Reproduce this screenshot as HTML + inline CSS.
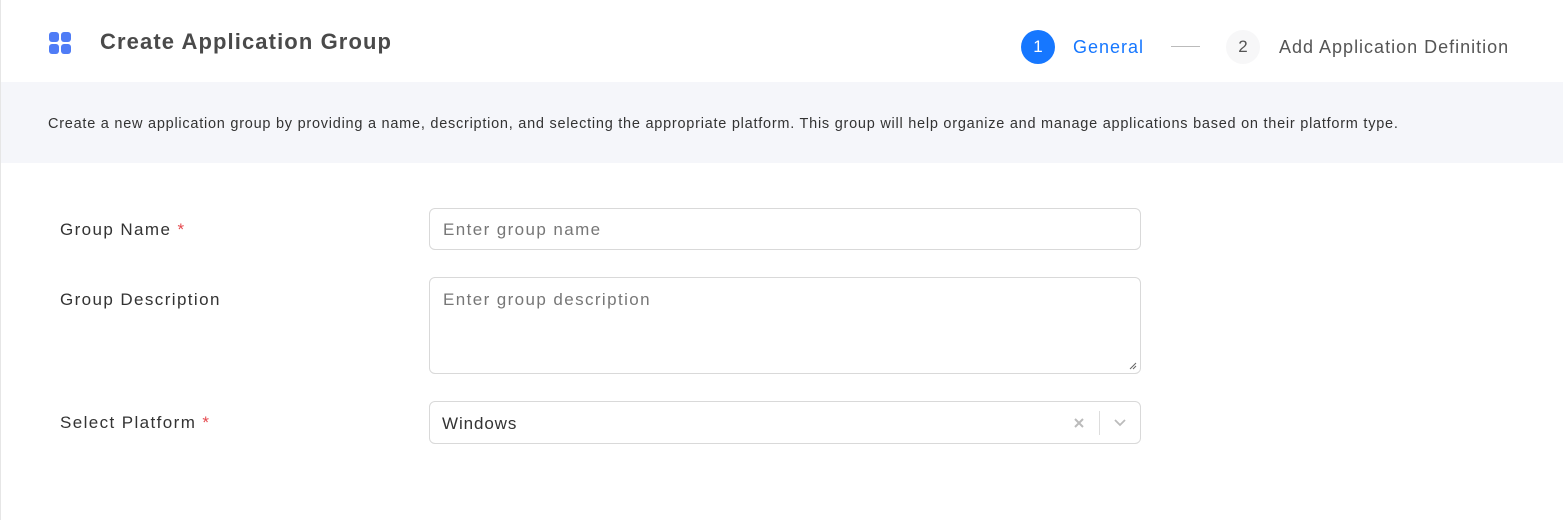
<!DOCTYPE html>
<html><head><meta charset="utf-8"><style>
*{box-sizing:border-box;margin:0;padding:0}
body{width:1563px;height:520px;background:#fff;font-family:"Liberation Sans",sans-serif;position:relative;overflow:hidden;color:#333}
.lb{position:absolute;left:0;top:0;width:1px;height:520px;background:#e6e6e6}
.hdr{position:absolute;left:1px;top:0;right:0;height:82px;background:#fff}
.icon{position:absolute;left:49px;top:32px;width:22px;height:22px}
.icon i{position:absolute;width:9.5px;height:9.5px;border-radius:3px;background:#4f7cf6}
.title{position:absolute;left:100px;top:29px;font-size:22px;font-weight:bold;color:#4a4a4a;letter-spacing:1.1px}
.step1{position:absolute;left:1021px;top:30px;width:34px;height:34px;border-radius:50%;background:#1677ff;color:#fff;font-size:17px;text-align:center;line-height:34px}
.s1t{position:absolute;left:1073px;top:37px;font-size:18px;color:#1677ff;letter-spacing:1px}
.line{position:absolute;left:1171px;top:46px;width:29px;height:1px;background:#bbb}
.step2{position:absolute;left:1226px;top:30px;width:34px;height:34px;border-radius:50%;background:#f7f7f8;color:#555;font-size:17px;text-align:center;line-height:34px}
.s2t{position:absolute;left:1279px;top:37px;font-size:18px;color:#555;letter-spacing:1px}
.band{position:absolute;left:1px;top:82px;right:0;height:81px;background:#f5f6fa}
.desc{position:absolute;left:48px;top:116px;font-size:14.5px;letter-spacing:0.75px;color:#333;white-space:nowrap}
.lbl{position:absolute;left:60px;font-size:17px;color:#333;letter-spacing:1.4px}
.lbl span{color:#e5484d}
.inp{position:absolute;left:429px;width:712px;border:1px solid #d9d9d9;border-radius:6px;background:#fff}
.ph{position:absolute;left:13px;font-size:17px;color:#777;letter-spacing:1.4px}
</style></head><body>
<div class="lb"></div>
<div class="hdr"></div>
<div class="icon"><i style="left:0;top:0"></i><i style="left:12px;top:0"></i><i style="left:0;top:12px"></i><i style="left:12px;top:12px"></i></div>
<div class="title">Create Application Group</div>
<div class="step1">1</div><div class="s1t">General</div>
<div class="line"></div>
<div class="step2">2</div><div class="s2t">Add Application Definition</div>
<div class="band"></div>
<div class="desc">Create a new application group by providing a name, description, and selecting the appropriate platform. This group will help organize and manage applications based on their platform type.</div>

<div class="lbl" style="top:220px">Group Name <span>*</span></div>
<div class="inp" style="top:208px;height:42px"><div class="ph" style="top:11px">Enter group name</div></div>

<div class="lbl" style="top:290px">Group Description</div>
<div class="inp" style="top:277px;height:97px"><div class="ph" style="top:12px">Enter group description</div>
<svg style="position:absolute;right:3px;bottom:3px" width="8" height="8"><path d="M1 7L7 1M4 7L7 4" stroke="#666" stroke-width="1"/></svg></div>

<div class="lbl" style="top:413px">Select Platform <span>*</span></div>
<div class="inp" style="top:401px;height:43px"><div class="ph" style="top:12px;left:12px;color:#333;letter-spacing:0.9px">Windows</div>
<svg style="position:absolute;left:643px;top:15px" width="12" height="12"><path d="M2 2L10 10M10 2L2 10" stroke="#bbb" stroke-width="2"/></svg>
<div style="position:absolute;left:669px;top:9px;width:1px;height:24px;background:#ddd"></div>
<svg style="position:absolute;left:683px;top:16px" width="14" height="10"><path d="M2 2L7 7L12 2" stroke="#bbb" stroke-width="1.8" fill="none"/></svg>
</div>
</body></html>
